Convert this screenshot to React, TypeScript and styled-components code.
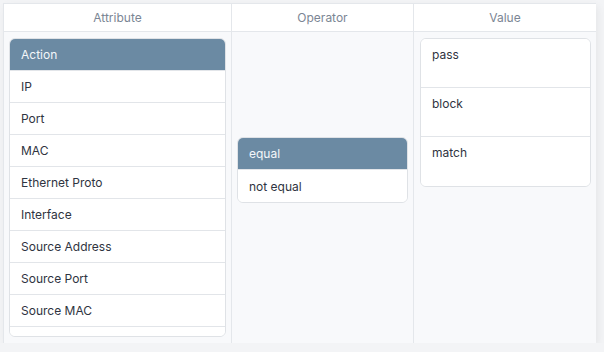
import React from "react";
import styled, { createGlobalStyle } from "styled-components";

const GlobalStyle = createGlobalStyle`
  html, body {
    margin: 0;
    padding: 0;
    background: #f3f4f6;
    font-family: "Inter", "Liberation Sans", sans-serif;
  }
`;

const Panel = styled.div`
  margin: 3px 0 0 3px;
  width: 593px;
  height: 340px;
  background: #f8f9fb;
  border-top: 1px solid #e4e7eb;
  border-left: 1px solid #e4e7eb;
  box-sizing: border-box;
  box-shadow: 2px 3px 8px rgba(0, 0, 0, 0.06);
  display: grid;
  grid-template-columns: 228px 182px 1fr;
  grid-template-rows: 28px 1fr;
`;

const HeadCell = styled.div<{ last?: boolean }>`
  display: flex;
  align-items: center;
  justify-content: center;
  background: #fff;
  border-bottom: 1px solid #e4e7eb;
  border-right: ${(p) => (p.last ? "none" : "1px solid #e4e7eb")};
  color: #7b8694;
  font-size: 12px;
`;

const Column = styled.div<{ last?: boolean; top?: number; left?: number }>`
  border-right: ${(p) => (p.last ? "none" : "1px solid #e4e7eb")};
  padding: ${(p) => p.top ?? 6}px 5px 6px ${(p) => p.left ?? 5}px;
  min-height: 0;
  overflow: hidden;
`;

const Card = styled.div<{ fill?: boolean }>`
  background: #fff;
  border: 1px solid #dfe2e6;
  border-radius: 6px;
  overflow: hidden;
  height: ${(p) => (p.fill ? "100%" : "auto")};
  box-sizing: border-box;
`;

const Item = styled.div<{ active?: boolean; tall?: boolean }>`
  box-sizing: border-box;
  height: ${(p) => (p.tall ? 49 : 32)}px;
  padding: ${(p) => (p.tall ? "8px 11px 0" : "0 11px")};
  display: flex;
  align-items: ${(p) => (p.tall ? "flex-start" : "center")};
  font-size: 12px;
  color: ${(p) => (p.active ? "#f4f7fa" : "#2f3441")};
  background: ${(p) => (p.active ? "#6b8aa3" : "#fff")};
  border-bottom: 1px solid #e2e5e9;
  &:last-child {
    border-bottom: none;
  }
`;

const attributes = [
  "Action",
  "IP",
  "Port",
  "MAC",
  "Ethernet Proto",
  "Interface",
  "Source Address",
  "Source Port",
  "Source MAC",
  "Destination Address",
];

const operators = ["equal", "not equal"];
const values = ["pass", "block", "match"];

export default function App() {
  return (
    <>
      <GlobalStyle />
      <Panel>
        <HeadCell>Attribute</HeadCell>
        <HeadCell>Operator</HeadCell>
        <HeadCell last>Value</HeadCell>
        <Column>
          <Card fill>
            {attributes.map((a, i) => (
              <Item key={a} active={i === 0}>
                {a}
              </Item>
            ))}
          </Card>
        </Column>
        <Column top={105}>
          <Card>
            {operators.map((o, i) => (
              <Item key={o} active={i === 0}>
                {o}
              </Item>
            ))}
          </Card>
        </Column>
        <Column last left={6}>
          <Card>
            {values.map((v) => (
              <Item key={v} tall>
                {v}
              </Item>
            ))}
          </Card>
        </Column>
      </Panel>
    </>
  );
}
